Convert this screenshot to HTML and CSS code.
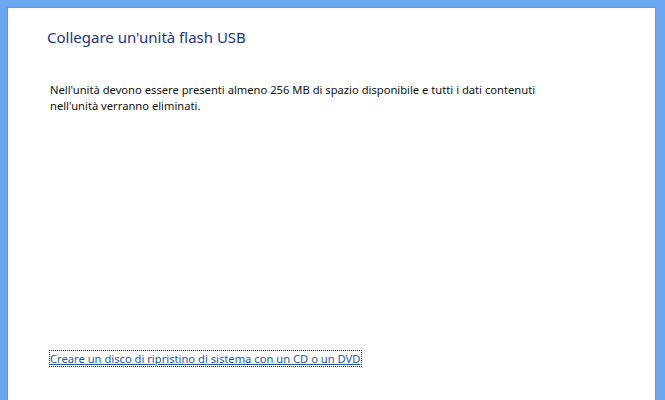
FILE: index.html
```html
<!DOCTYPE html>
<html lang="it">
<head>
    <meta charset="UTF-8">
    <title>Crea unità di ripristino</title>
    <link rel="stylesheet" href="styles.css">
</head>
<body>
    <div class="window">
        <div class="content">
            <h1 class="title">Collegare un'unità flash USB</h1>
            <p class="info">Nell'unità devono essere presenti almeno 256 MB di spazio disponibile e tutti i dati contenuti<br>nell'unità verranno eliminati.</p>
            <div class="footer">
                <a href="#" class="link">Creare un disco di ripristino di sistema con un CD o un DVD</a>
            </div>
        </div>
    </div>
</body>
</html>
```

FILE: styles.css
```css
body {
    margin: 0;
    font-family: "Noto Sans", "Open Sans", sans-serif;
    background-color: #fff;
}

/* blue window frame, no bottom edge in view */
.window {
    height: 400px;
    box-sizing: border-box;
    background: #6ba7f1;
    padding: 7px 9px 0 7px;
}

.content {
    height: 100%;
    background: #fff;
    border-top: 1px solid #5d97e0;
    border-left: 1px solid #5d97e0;
    border-right: 1px solid #5d97e0;
    box-sizing: border-box;
    display: flex;
    flex-direction: column;
    padding: 0 0 0 39px;
}

.title {
    font-size: 15px;
    font-weight: normal;
    color: #1e3287;
    margin: 19px 0 0 0;
    line-height: 20px;
}

.info {
    font-size: 11.2px;
    line-height: 16px;
    color: #111;
    margin: 35px 0 0 3px;
}

.footer {
    margin-top: auto;
    padding: 0 0 32px 3px;
}

.link {
    font-size: 11.2px;
    line-height: 15px;
    color: #1f5a98;
    outline: 1px dotted #222;
}
```
